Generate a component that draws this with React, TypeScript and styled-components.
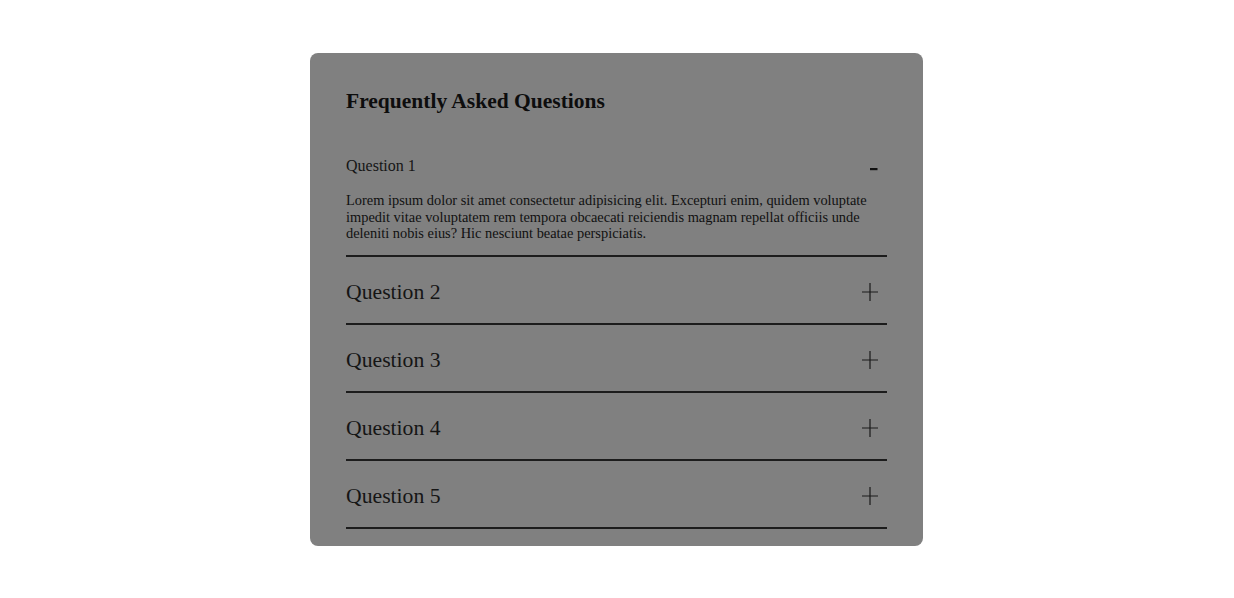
import styled, { createGlobalStyle } from 'styled-components';

const GlobalStyle = createGlobalStyle`
  html, body {
    margin: 0;
    padding: 0;
    background: #ffffff;
  }
  body {
    font-family: "Liberation Serif", "Times New Roman", serif;
  }
`;

interface FaqItem {
    question: string;
    answer: string;
}

const faqs: FaqItem[] = [
    {
        question: 'Question 1',
        answer: 'Lorem ipsum dolor sit amet consectetur adipisicing elit. Excepturi enim, quidem voluptate impedit vitae voluptatem rem tempora obcaecati reiciendis magnam repellat officiis unde deleniti nobis eius? Hic nesciunt beatae perspiciatis.',
    },
    { question: 'Question 2', answer: '' },
    { question: 'Question 3', answer: '' },
    { question: 'Question 4', answer: '' },
    { question: 'Question 5', answer: '' },
];

const PlusIcon = () => (
    <svg width="18" height="20" viewBox="0 0 18 20">
        <path d="M9 1 V19 M1 10 H17" stroke="#1a1a1a" strokeWidth="1.2" fill="none" />
    </svg>
);

const MinusIcon = () => (
    <svg width="8" height="4" viewBox="0 0 8 4">
        <rect x="0" y="1" width="7.5" height="2.2" fill="#111" />
    </svg>
);

const App = () => {
    const openIndex = 0;
    return (
        <Page>
            <GlobalStyle />
            <Card>
                <Title>Frequently Asked Questions</Title>
                <List>
                    {faqs.map((item, i) => {
                        const open = i === openIndex;
                        return (
                            <Item key={item.question}>
                                <Header $open={open}>
                                    <span>{item.question}</span>
                                    <Toggle $open={open}>{open ? <MinusIcon /> : <PlusIcon />}</Toggle>
                                </Header>
                                {open && <Answer>{item.answer}</Answer>}
                            </Item>
                        );
                    })}
                </List>
            </Card>
        </Page>
    );
};

const Page = styled.div`
  display: flex;
  justify-content: center;
  padding-top: 53px;
  padding-right: 1px;
`;

const Card = styled.div`
  width: 613px;
  box-sizing: border-box;
  background: #808080;
  border-radius: 8px;
  padding: 36px 36px 17px;
  color: #111;
`;

const Title = styled.h2`
  margin: 0 0 35px;
  font-size: 21.5px;
  line-height: 24px;
  font-weight: 700;
  color: #0d0d0d;
`;

const List = styled.div`
  display: flex;
  flex-direction: column;
`;

const Item = styled.div`
  border-bottom: 2px solid #1c1c1c;
`;

const Header = styled.div<{ $open: boolean }>`
  display: flex;
  align-items: center;
  justify-content: space-between;
  font-size: ${props => props.$open ? '16px' : '21.7px'};
  line-height: ${props => props.$open ? '18px' : '24px'};
  padding: ${props => props.$open ? '9px 0' : '23px 0 19px'};
  color: #151515;
`;

const Toggle = styled.span<{ $open: boolean }>`
  display: flex;
  align-items: center;
  margin-right: ${props => props.$open ? '9px' : '8px'};
  margin-top: ${props => props.$open ? '6px' : '0'};
`;

const Answer = styled.p`
  margin: 0;
  padding: 8px 0 13.5px;
  font-size: 14.4px;
  line-height: 16.5px;
  color: #111;
`;

export default App;
